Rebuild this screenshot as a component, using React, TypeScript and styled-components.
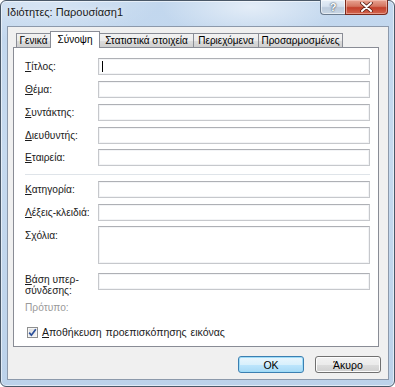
import React from "react";
import styled, { createGlobalStyle, css } from "styled-components";

const GlobalStyle = createGlobalStyle`
  html, body {
    margin: 0;
    padding: 0;
    background: #ffffff;
  }
  body {
    font-family: "Liberation Sans", Arial, sans-serif;
  }
`

const Frame = styled.div`
  width: 395px;
  height: 387px;
  box-sizing: border-box;
  border: 1px solid #4a5868;
  border-radius: 6px;
  padding: 0 5px 6px 6px;
  display: flex;
  flex-direction: column;
  background:
    radial-gradient(ellipse 90px 30px at 250px 6px, rgba(255, 255, 255, 0.55), transparent),
    radial-gradient(ellipse 120px 40px at 40px 0px, rgba(255, 255, 255, 0.35), transparent),
    linear-gradient(180deg, #c2d7ee 0%, #c6daef 40%, #bcd2ea 100%);
  box-shadow: inset 0 0 0 1px rgba(255, 255, 255, 0.55);
`

const TitleBar = styled.div`
  height: 25px;
  display: flex;
  justify-content: space-between;
  align-items: flex-start;
`

const TitleText = styled.div`
  padding-top: 5px;
  font-size: 11px;
  color: #1a1a1a;
  text-shadow: 0 0 6px rgba(255, 255, 255, 0.9);
`

const Controls = styled.div`
  display: flex;
  margin-top: -1px;
  margin-right: 1px;
`

const CaptionButton = styled.div<{ $close?: boolean }>`
  height: 15px;
  box-sizing: border-box;
  border: 1px solid #6b7b8e;
  border-top: none;
  display: flex;
  align-items: center;
  justify-content: center;
  ${(p) =>
    p.$close
      ? css`
          width: 43px;
          border-color: #7a2a1c;
          border-radius: 0 0 4px 0;
          background: linear-gradient(180deg, #e8a493 0%, #d47560 45%, #c3402b 55%, #d3664f 100%);
          box-shadow: inset 0 0 0 1px rgba(255, 220, 210, 0.45);
        `
      : css`
          width: 25px;
          border-right: none;
          border-radius: 0 0 0 4px;
          background: linear-gradient(180deg, #e6eef7 0%, #d6e2ef 45%, #bccbdc 55%, #c9d6e4 100%);
          box-shadow: inset 0 0 0 1px rgba(255, 255, 255, 0.55);
          font-size: 11px;
          font-weight: bold;
          color: #ffffff;
          text-shadow: 0 0 1px #3d4c5e, 0 0 2px #3d4c5e;
        `}
`

const Client = styled.div`
  flex: 1;
  background: #f0f0f0;
  border: 1px solid #8c99ab;
  padding: 5px 0 0 5px;
  display: flex;
  flex-direction: column;
`

const TabRow = styled.div`
  display: flex;
  align-items: flex-end;
  height: 16px;
  margin-left: 3px;
  position: relative;
  z-index: 1;
  margin-bottom: -1px;
`

const Tab = styled.div<{ $active?: boolean; $w: number }>`
  box-sizing: border-box;
  width: ${(p) => p.$w}px;
  font-size: 10px;
  color: #000;
  border: 1px solid #898c95;
  border-right: none;
  display: flex;
  align-items: center;
  justify-content: center;
  white-space: nowrap;
  &:last-child {
    border-right: 1px solid #898c95;
  }
  ${(p) =>
    p.$active
      ? css`
          height: 17px;
          background: #ffffff;
          border-right: 1px solid #898c95;
          border-bottom: none;
          position: relative;
          z-index: 2;
          padding-bottom: 2px;
          & + div {
            border-left: none;
          }
        `
      : css`
          height: 15px;
          background: linear-gradient(180deg, #f2f2f2 0%, #ebebeb 50%, #dddddd 51%, #cfcfcf 100%);
        `}
`

const Panel = styled.div`
  height: 300px;
  box-sizing: border-box;
  margin-right: 9px;
  background: #ffffff;
  border: 1px solid #898c95;
  padding: 10px 8px 0 11px;
  display: flex;
  flex-direction: column;
`

const Row = styled.div<{ $top?: number; $align?: string }>`
  display: flex;
  align-items: ${(p) => p.$align || "center"};
  margin-top: ${(p) => p.$top ?? 0}px;
`

const Label = styled.div<{ $pad?: number; $disabled?: boolean }>`
  width: 73px;
  flex-shrink: 0;
  font-size: 10.2px;
  line-height: 11px;
  padding-top: ${(p) => p.$pad ?? 0}px;
  color: ${(p) => (p.$disabled ? "#9a9a9a" : "#1b1b1b")};
`

const Key = styled.span`
  text-decoration: underline;
`

const Field = styled.div<{ $h?: number }>`
  flex: 1;
  height: ${(p) => p.$h ?? 17}px;
  box-sizing: border-box;
  border: 1px solid #c6c8cc;
  border-top-color: #aeb0b5;
  box-shadow: inset 0 0 0 1px #f3f4f6;
  background: #ffffff;
  display: flex;
  align-items: center;
  padding-left: 3px;
`

const Caret = styled.div`
  width: 1px;
  height: 11px;
  background: #000000;
`

const Separator = styled.div`
  margin-top: 8px;
  height: 1px;
  border-top: 1px solid #dfe4e9;
`

const CheckRow = styled.div`
  display: flex;
  align-items: center;
  gap: 4px;
  margin-top: 13px;
  margin-left: 2px;
  font-size: 10.5px;
  word-spacing: 1px;
  color: #1b1b1b;
`

const CheckBox = styled.div`
  width: 11px;
  height: 11px;
  box-sizing: border-box;
  border: 1px solid #8e8f8f;
  background: linear-gradient(135deg, #dcdcdc 0%, #f4f4f4 100%);
  box-shadow: inset 0 0 0 1px #f6f6f6;
  display: flex;
  align-items: center;
  justify-content: center;
`

const Footer = styled.div`
  display: flex;
  justify-content: flex-end;
  gap: 11px;
  padding: 9px 7px 0 0;
`

const Button = styled.div<{ $default?: boolean }>`
  width: 66px;
  height: 17px;
  box-sizing: border-box;
  border-radius: 3px;
  font-size: 10.5px;
  color: #000;
  display: flex;
  align-items: center;
  justify-content: center;
  ${(p) =>
    p.$default
      ? css`
          border: 1px solid #3c7fb1;
          background: linear-gradient(180deg, #eaf6fd 0%, #d9f0fc 50%, #bee6fd 51%, #a7d9f5 100%);
          box-shadow: inset 0 0 0 1px #9edcf8;
        `
      : css`
          border: 1px solid #707070;
          background: linear-gradient(180deg, #f2f2f2 0%, #ebebeb 50%, #dddddd 51%, #cfcfcf 100%);
          box-shadow: inset 0 0 0 1px #fcfcfc;
        `}
`

const tabs = [
  { name: "Γενικά", w: 34 },
  { name: "Σύνοψη", w: 50, active: true },
  { name: "Στατιστικά στοιχεία", w: 93 },
  { name: "Περιεχόμενα", w: 65 },
  { name: "Προσαρμοσμένες", w: 85 },
];

function App() {
  return (
    <>
      <GlobalStyle />
      <Frame>
        <TitleBar>
          <TitleText>Ιδιότητες: Παρουσίαση1</TitleText>
          <Controls>
            <CaptionButton>?</CaptionButton>
            <CaptionButton $close>
              <svg width="13" height="10" viewBox="0 0 13 10">
                <path
                  d="M2 1 L11 9 M11 1 L2 9"
                  stroke="#5a2016"
                  strokeWidth="3.6"
                  strokeLinecap="round"
                />
                <path
                  d="M2 1 L11 9 M11 1 L2 9"
                  stroke="#ffffff"
                  strokeWidth="2"
                  strokeLinecap="round"
                />
              </svg>
            </CaptionButton>
          </Controls>
        </TitleBar>
        <Client>
          <TabRow>
            {tabs.map((t) => (
              <Tab key={t.name} $w={t.w} $active={t.active}>
                {t.name}
              </Tab>
            ))}
          </TabRow>
          <Panel>
            <Row>
              <Label><Key>Τ</Key>ίτλος:</Label>
              <Field><Caret /></Field>
            </Row>
            <Row $top={6}>
              <Label><Key>Θ</Key>έμα:</Label>
              <Field />
            </Row>
            <Row $top={6}>
              <Label><Key>Σ</Key>υντάκτης:</Label>
              <Field />
            </Row>
            <Row $top={6}>
              <Label><Key>Δ</Key>ιευθυντής:</Label>
              <Field />
            </Row>
            <Row $top={5}>
              <Label><Key>Ε</Key>ταιρεία:</Label>
              <Field />
            </Row>
            <Separator />
            <Row $top={5}>
              <Label><Key>Κ</Key>ατηγορία:</Label>
              <Field />
            </Row>
            <Row $top={6}>
              <Label><Key>Λ</Key>έξεις-κλειδιά:</Label>
              <Field />
            </Row>
            <Row $top={5} $align="flex-start">
              <Label $pad={4}>Σ<Key>χ</Key>όλια:</Label>
              <Field $h={38} />
            </Row>
            <Row $top={9} $align="flex-start">
              <Label $pad={1}><Key>Β</Key>άση υπερ-<br />σύνδεσης:</Label>
              <Field />
            </Row>
            <Row $top={6}>
              <Label $disabled>Πρότυπο:</Label>
            </Row>
            <CheckRow>
              <CheckBox>
                <svg width="9" height="9" viewBox="0 0 9 9">
                  <path d="M1.2 4.6 L3.4 7.2 L7.8 1.2" fill="none" stroke="#2a4f9a" strokeWidth="1.7" />
                </svg>
              </CheckBox>
              <span><Key>Α</Key>ποθήκευση προεπισκόπησης εικόνας</span>
            </CheckRow>
          </Panel>
          <Footer>
            <Button $default>OK</Button>
            <Button>Άκυρο</Button>
          </Footer>
        </Client>
      </Frame>
    </>
  );
}

export default App;
